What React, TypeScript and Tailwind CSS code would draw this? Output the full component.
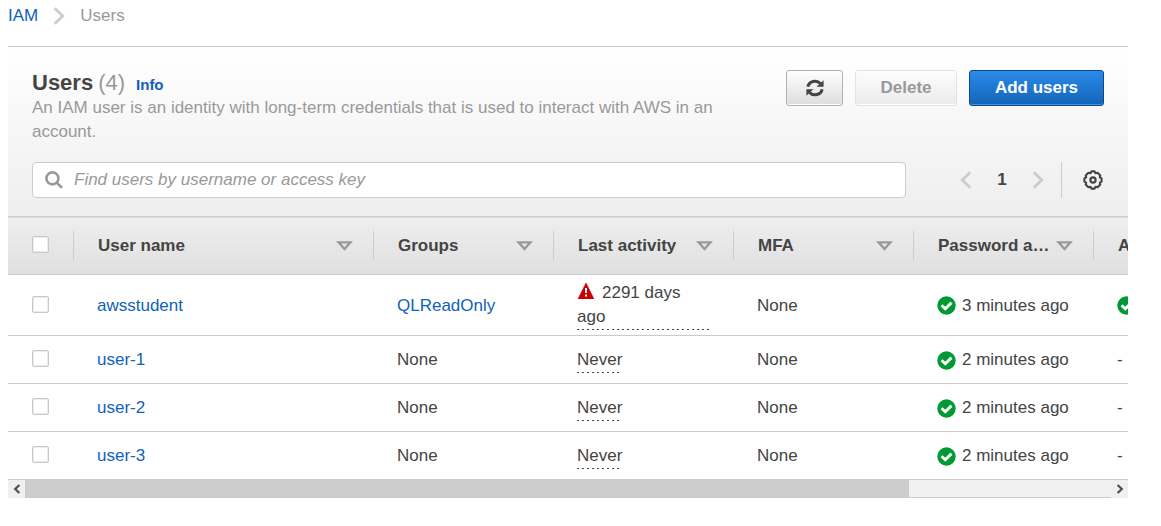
import { useRef } from "react";
import type { ReactNode } from "react";

type Activity = { text: string; warning?: boolean };

type User = {
  name: string;
  group: string;
  groupLink?: boolean;
  activity: Activity;
  mfa: string;
  passwordAge: string;
  keyAge: string;
};

const users: User[] = [
  { name: "awsstudent", group: "QLReadOnly", groupLink: true, activity: { text: "2291 days ago", warning: true }, mfa: "None", passwordAge: "3 minutes ago", keyAge: "3 minutes ago" },
  { name: "user-1", group: "None", activity: { text: "Never" }, mfa: "None", passwordAge: "2 minutes ago", keyAge: "-" },
  { name: "user-2", group: "None", activity: { text: "Never" }, mfa: "None", passwordAge: "2 minutes ago", keyAge: "-" },
  { name: "user-3", group: "None", activity: { text: "Never" }, mfa: "None", passwordAge: "2 minutes ago", keyAge: "-" },
];

const columns = ["User name", "Groups", "Last activity", "MFA", "Password age", "Active key age"];

function Chevron({ left = false }: { left?: boolean }) {
  return (
    <svg width="12" height="18" viewBox="0 0 12 18" fill="none" stroke="#ccc" strokeWidth="2.8" aria-hidden="true">
      <path d={left ? "M10.3 1.2 2.2 9l8.1 7.8" : "M1.7 1.2 9.8 9l-8.1 7.8"} />
    </svg>
  );
}

function RefreshIcon() {
  return (
    <svg width="18" height="18" viewBox="0 0 18 18" aria-hidden="true">
      <path d="M1.9 7.8A7.1 6.6 0 0 1 14.4 4.6M16.1 10.2A7.1 6.6 0 0 1 3.6 13.4" fill="none" stroke="#444" strokeWidth="3" />
      <path d="M17.6 1.2v6.6h-7zM.4 16.8v-6.6h7z" fill="#444" />
    </svg>
  );
}

function GearIcon() {
  return (
    <svg width="20" height="20" viewBox="0 0 20 20" fill="none" stroke="#444" aria-hidden="true">
      <path
        strokeWidth="2.1"
        strokeLinejoin="round"
        d="M8.4 1.4h3.2l1 1.8 2-.5 2.7 2.7-.5 2 1.8 1v3.2l-1.8 1 .5 2-2.7 2.7-2-.5-1 1.8H8.4l-1-1.8-2 .5-2.7-2.7.5-2-1.8-1V8.4l1.8-1-.5-2 2.7-2.7 2 .5z"
      />
      <circle cx="10" cy="10" r="2.6" strokeWidth="2.2" />
    </svg>
  );
}

function SearchIcon() {
  return (
    <svg width="18" height="18" viewBox="0 0 18 18" fill="none" stroke="#999" strokeWidth="2.6" aria-hidden="true">
      <circle cx="7.4" cy="7.4" r="6" />
      <path d="m11.6 11.6 5.4 5.2" />
    </svg>
  );
}

function SortIcon() {
  return (
    <svg width="17" height="10" viewBox="0 0 17 10" fill="none" stroke="#999" strokeWidth="2.3" aria-hidden="true">
      <path d="M2.6 1.3h11.8L8.5 7.9z" />
    </svg>
  );
}

function WarningIcon() {
  return (
    <svg className="mr-2 inline-block align-[-1px]" width="17" height="16" viewBox="0 0 17 16" aria-hidden="true">
      <path d="M9 0 17 16H1z" fill="#c00" stroke="#c00" strokeWidth=".6" strokeLinejoin="round" />
      <path d="M9 5v5M9 11.4v2" stroke="#fff" strokeWidth="2" />
    </svg>
  );
}

function CheckIcon() {
  return (
    <svg className="shrink-0" width="19" height="19" viewBox="0 0 19 19" aria-hidden="true">
      <circle cx="9.5" cy="9.5" r="9.2" fill="#093" />
      <path d="m4.6 9.2 3.7 3.6 6.2-6.2" fill="none" stroke="#fff" strokeWidth="2.9" />
    </svg>
  );
}

function Age({ children }: { children: ReactNode }) {
  return (
    <span className="flex items-center gap-[6px] whitespace-nowrap">
      <CheckIcon />
      {children}
    </span>
  );
}

function Checkbox({ label }: { label: string }) {
  return (
    <input
      type="checkbox"
      aria-label={label}
      className="block size-[17px] appearance-none rounded-[2px] border border-[#c8c8c8] bg-white shadow-[inset_0_0_0_1px_#ececec] checked:bg-[#146eb4]"
    />
  );
}

function ScrollArrow({ left = false, onClick }: { left?: boolean; onClick: () => void }) {
  return (
    <button
      type="button"
      aria-label={left ? "Scroll left" : "Scroll right"}
      onClick={onClick}
      className="flex w-[17px] shrink-0 items-center justify-center bg-[#f0f0f0]"
    >
      <svg width="8" height="10" viewBox="0 0 8 10" fill="none" stroke="#505050" strokeWidth="2.2" aria-hidden="true">
        <path d={left ? "M6.4 1 2.2 5l4.2 4" : "M1.6 1l4.2 4-4.2 4"} />
      </svg>
    </button>
  );
}

const link = "text-[#0f62b8] hover:underline";
const cell = "pt-[6px] pb-[5px] pl-6 pr-6";

export default function App() {
  const scroller = useRef<HTMLDivElement>(null);
  const scroll = (dx: number) => scroller.current?.scrollBy({ left: dx });

  return (
    <main className="bg-white pt-1 pr-[33px] pb-7 pl-2 font-['Liberation_Sans',Arial,sans-serif] text-[17px] leading-6 text-[#444]">
      <nav aria-label="Breadcrumb" className="mb-[18px] flex items-center">
        <a href="#iam" className={link}>IAM</a>
        <span className="mr-[15px] ml-[15px]"><Chevron /></span>
        <span className="text-[#999]">Users</span>
      </nav>

      <section className="border-t border-[#ccc]">
        <header className="bg-linear-to-b from-white to-[#eee] px-6 pt-[23px] pb-[18px]">
          <div className="flex items-start gap-3">
            <div className="flex-1">
              <h1 className="flex h-[26px] items-baseline text-[22px] leading-[26px] font-bold">
                Users
                <span className="ml-[5px] font-normal text-[#999]">(4)</span>
                <a href="#info" className="ml-[11px] text-[15px] text-[#0f62b8]">Info</a>
              </h1>
              <p className="text-[#999]">
                An IAM user is an identity with long-term credentials that is used to interact with AWS in an account.
              </p>
            </div>
            <button
              type="button"
              aria-label="Refresh"
              className="flex h-9 w-[57px] items-center justify-center rounded-[3px] border border-[#b0b0b0] bg-linear-to-b from-white to-[#ddd] shadow-[inset_0_-1px_0_#fff]"
            >
              <RefreshIcon />
            </button>
            <button
              type="button"
              disabled
              className="h-9 w-[102px] rounded-[3px] border border-[#e2e2e2] bg-linear-to-b from-[#fdfdfd] to-[#ebebeb] font-bold text-[#999] shadow-[inset_0_-1px_0_#fff]"
            >
              Delete
            </button>
            <button
              type="button"
              className="h-9 w-[135px] rounded-[3px] border border-[#0d4a8b] bg-linear-to-b from-[#2a8bea] to-[#1464b8] font-bold text-white shadow-[inset_0_-1px_0_#3a93ec]"
            >
              Add users
            </button>
          </div>

          <div className="mt-[18px] flex items-center">
            <label className="flex h-9 flex-1 items-center gap-[11px] rounded-[4px] border border-[#ccc] bg-white px-3">
              <SearchIcon />
              <input
                type="text"
                aria-label="Find users"
                placeholder="Find users by username or access key"
                className="min-w-0 flex-1 bg-transparent outline-none placeholder:text-[#999] placeholder:italic"
              />
            </label>
            <div className="ml-[54px] flex items-center">
              <button type="button" aria-label="Previous page"><Chevron left /></button>
              <span className="w-[60px] text-center font-bold">1</span>
              <button type="button" aria-label="Next page"><Chevron /></button>
            </div>
            <button type="button" aria-label="Settings" className="ml-[17px] flex h-9 items-center border-l border-[#ccc] pr-px pl-[21px]">
              <GearIcon />
            </button>
          </div>
        </header>

        <div ref={scroller} className="overflow-x-hidden">
          <table className="w-[1376px] table-fixed border-collapse text-left">
            <colgroup>
              <col className="w-[65px]" />
              <col className="w-[300px]" />
              <col className="w-[180px]" />
              <col className="w-[180px]" />
              <col className="w-[180px]" />
              <col className="w-[180px]" />
              <col />
            </colgroup>
            <thead>
              <tr className="h-[58px] border-y border-[#ccc] bg-linear-to-b from-[#eee] to-[#e0e0e0]">
                <th scope="col" className="pb-[2px] pl-6"><Checkbox label="Select all users" /></th>
                {columns.map((name) => (
                  <th key={name} scope="col" className="p-0 font-bold">
                    <div className="flex h-[29px] items-center justify-between gap-1 border-l border-[#ccc] pr-5 pl-6">
                      <span className="truncate">{name}</span>
                      <button type="button" aria-label={"Sort by " + name} className="shrink-0"><SortIcon /></button>
                    </div>
                  </th>
                ))}
              </tr>
            </thead>
            <tbody>
              {users.map((user) => (
                <tr key={user.name} className="h-12 border-b border-[#ccc]">
                  <td className="pb-[2px] pl-6"><Checkbox label={"Select " + user.name} /></td>
                  <td className={cell}><a href={"#" + user.name} className={link}>{user.name}</a></td>
                  <td className={cell}>
                    {user.groupLink ? <a href={"#" + user.group} className={link}>{user.group}</a> : user.group}
                  </td>
                  <td className={cell}>
                    <span className="inline-block bg-[repeating-linear-gradient(to_right,#444_0_2px,transparent_2px_5px)] bg-[length:100%_1px] bg-bottom bg-no-repeat pb-px align-top">
                      {user.activity.warning && <WarningIcon />}
                      {user.activity.text}
                    </span>
                  </td>
                  <td className={cell}>{user.mfa}</td>
                  <td className="pt-[6px] pb-[5px] pl-6"><Age>{user.passwordAge}</Age></td>
                  <td className={cell}>{user.keyAge === "-" ? "-" : <Age>{user.keyAge}</Age>}</td>
                </tr>
              ))}
            </tbody>
          </table>
        </div>

        <div className="flex h-[18px]">
          <ScrollArrow left onClick={() => scroll(-120)} />
          <div className="flex-1 border-b border-[#ccc] bg-[#f0f0f0]">
            <div className="h-[18px] w-[81.4%] bg-[#ccc]" />
          </div>
          <ScrollArrow onClick={() => scroll(120)} />
        </div>
      </section>
    </main>
  );
}
